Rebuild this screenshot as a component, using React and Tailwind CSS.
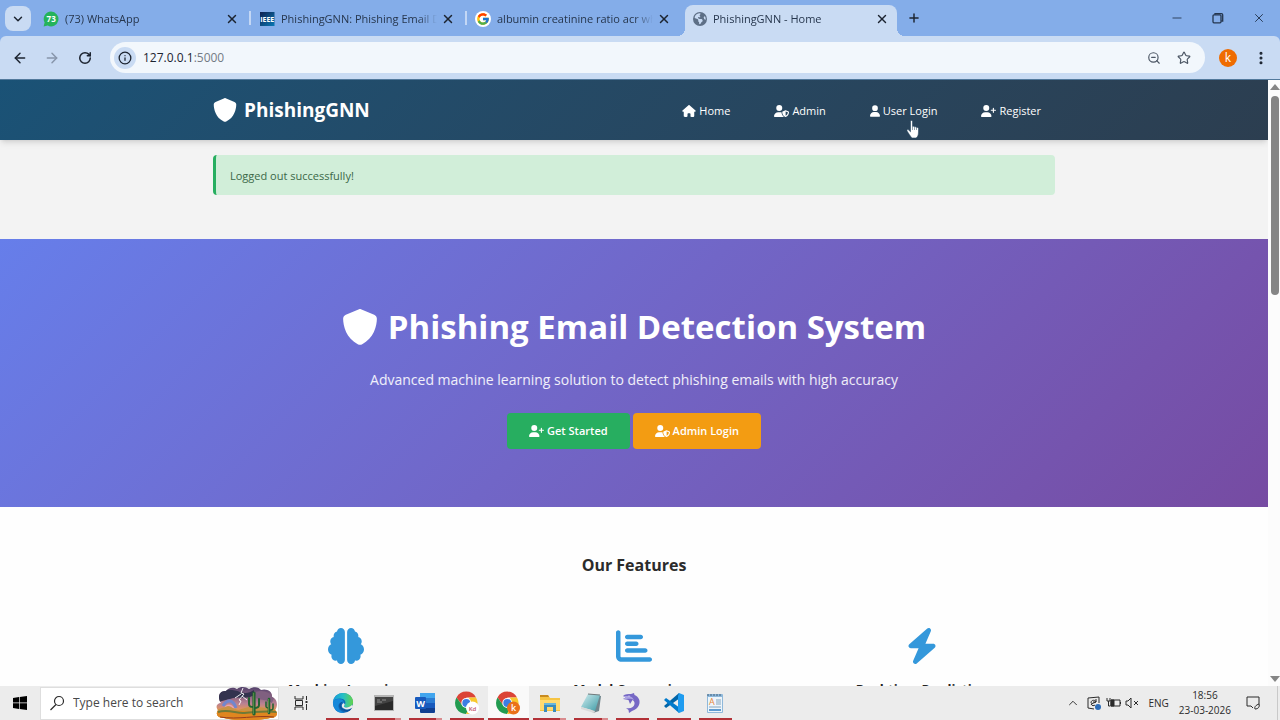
import {
  ArrowLeft,
  ArrowRight,
  ChevronDown,
  ChevronUp,
  EllipsisVertical,
  Info,
  Minus,
  Plus,
  RotateCw,
  Star,
  X,
  ZoomOut,
} from "lucide-react";
import {
  FaBolt,
  FaBrain,
  FaChartBar,
  FaEarthAmericas,
  FaHouse,
  FaShield,
  FaUser,
  FaUserPlus,
  FaUserShield,
} from "react-icons/fa6";
import { FcGoogle } from "react-icons/fc";

function WhatsAppIcon() {
  return (
    <svg viewBox="0 0 16 16" className="size-4 shrink-0">
      <path d="M8 .6a7.4 7.4 0 1 1-3.3 14L.6 15.500l1-3.900A7.400 7.400 0 0 1 8 .6z" fill="#25b35a" />
      <text x="8.200" y="11" textAnchor="middle" fontSize="8" fontWeight="700" fill="#fff">
        73
      </text>
    </svg>
  );
}

function IeeeIcon() {
  return (
    <svg viewBox="0 0 16 16" className="size-4 shrink-0">
      <defs>
        <linearGradient id="ieee" x1="0" y1="0" x2="1" y2="1">
          <stop offset="0" stopColor="#10204f" />
          <stop offset="1" stopColor="#0879b5" />
        </linearGradient>
      </defs>
      <rect x="1" y="1" width="14.500" height="14" fill="url(#ieee)" />
      <text x="8.200" y="11" textAnchor="middle" fontSize="7" fontWeight="700" fill="#fff">
        IEEE
      </text>
    </svg>
  );
}

function GoogleIcon() {
  return (
    <span className="flex size-4 shrink-0 items-center justify-center rounded-full bg-white">
      <FcGoogle className="size-3.5" />
    </span>
  );
}

const tabs = [
  { title: "(73) WhatsApp", icon: <WhatsAppIcon />, separator: true },
  { title: "PhishingGNN: Phishing Email D", icon: <IeeeIcon />, separator: true },
  { title: "albumin creatinine ratio acr wha", icon: <GoogleIcon /> },
  {
    title: "PhishingGNN - Home",
    icon: <FaEarthAmericas className="size-3.5 shrink-0 text-[#5d6f86]" />,
    active: true,
  },
];

function BrowserTab({ tab }) {
  return (
    <div
      className={
        tab.active
          ? "relative mx-0.5 flex h-[31px] w-[212px] shrink-0 items-center self-end rounded-t-lg bg-[#c9dbf3] pb-[3px] pl-2 pr-2"
          : "relative flex h-[31px] w-[216px] shrink-0 items-center self-end pb-[3px] pl-2 pr-3"
      }
    >
      {tab.active && (
        <>
          <span className="absolute -left-2 bottom-0 size-2 bg-[radial-gradient(circle_at_0_0,transparent_8px,#c9dbf3_8px)]" />
          <span className="absolute -right-2 bottom-0 size-2 bg-[radial-gradient(circle_at_100%_0,transparent_8px,#c9dbf3_8px)]" />
        </>
      )}
      {tab.icon}
      <span className="ml-1.5 min-w-0 flex-1 overflow-hidden whitespace-nowrap text-[11px] text-[#26364d] mask-r-from-88% mask-r-to-100%">
        {tab.title}
      </span>
      <button type="button" aria-label="Close tab" className="ml-1 text-[#1c2430]">
        <X className="size-3.5" strokeWidth={2.5} />
      </button>
      {tab.separator && <span className="absolute right-0 top-1.5 h-3.5 w-0.5 bg-[#c3d7f5]" />}
    </div>
  );
}

function TabStrip() {
  return (
    <div className="flex h-9 shrink-0 bg-[#84ade9]">
      <button
        type="button"
        aria-label="Search tabs"
        className="ml-[5px] mr-1 mt-1.5 flex h-[25px] w-[26px] items-center justify-center rounded-lg bg-[#c9dbf3] text-[#1c2430]"
      >
        <ChevronDown className="size-3.5" strokeWidth={2.5} />
      </button>
      {tabs.map((tab) => (
        <BrowserTab key={tab.title} tab={tab} />
      ))}
      <button type="button" aria-label="New tab" className="ml-2 text-[#1c2430]">
        <Plus className="size-3.5" strokeWidth={2.5} />
      </button>
      <div className="ml-auto flex w-[110px] items-center justify-between pr-3.5 text-[#24364f]">
        <button type="button" aria-label="Minimize">
          <Minus className="size-3.5" strokeWidth={1.5} />
        </button>
        <button type="button" aria-label="Restore">
          <svg viewBox="0 0 12 12" className="size-3" fill="none" stroke="currentColor" strokeWidth="1.300">
            <rect x="1" y="2.800" width="8" height="8" rx="1" />
            <path d="M3 2.800V1.600h6.500a1.200 1.200 0 0 1 1.200 1.200V9H9.300" />
          </svg>
        </button>
        <button type="button" aria-label="Close">
          <X className="size-3.5" strokeWidth={1.6} />
        </button>
      </div>
    </div>
  );
}

function Toolbar() {
  return (
    <div className="bg-[#84ade9]">
      <div className="flex h-11 shrink-0 items-center rounded-t-md border-b border-[#52799c] bg-[#c9dbf3] text-[#1c2430]">
        <button type="button" aria-label="Back" className="ml-3">
          <ArrowLeft className="size-4" strokeWidth={2.2} />
        </button>
        <button type="button" aria-label="Forward" className="ml-4 text-[#8795aa]">
          <ArrowRight className="size-4" strokeWidth={2.2} />
        </button>
        <button type="button" aria-label="Reload" className="ml-[18px]">
          <RotateCw className="size-3.5" strokeWidth={2.6} />
        </button>
        <div className="ml-[18px] flex h-[31px] min-w-0 flex-1 items-center rounded-full bg-[#f2f7fc] pl-1 pr-3.5">
          <button
            type="button"
            aria-label="Site information"
            className="flex size-[22px] items-center justify-center rounded-full bg-[#c9dbf3]"
          >
            <Info className="size-3.5" strokeWidth={2.2} />
          </button>
          <p className="ml-[7px] flex-1 text-xs">
            127.0.0.1<span className="text-[#747b84]">:5000</span>
          </p>
          <button type="button" aria-label="Zoom" className="text-[#4c5664]">
            <ZoomOut className="size-3.5" />
          </button>
          <button type="button" aria-label="Bookmark" className="ml-4 text-[#4c5664]">
            <Star className="size-3.5" />
          </button>
        </div>
        <button
          type="button"
          aria-label="Profile"
          className="ml-3.5 flex size-[18px] items-center justify-center rounded-full bg-[#ef6c00] text-xs text-white"
        >
          k
        </button>
        <button type="button" aria-label="Menu" className="ml-4 mr-[11px]">
          <EllipsisVertical className="size-4" strokeWidth={2.6} />
        </button>
      </div>
    </div>
  );
}

function HandCursor() {
  return (
    <svg viewBox="0 0 15 19" className="absolute left-[50px] top-[17px] h-[19px] w-[15px]">
      <path
        d="M4.500 1.500c0-1.300 2-1.300 2 0v5.200c.3-.7 2-.6 2 .4.500-.6 2-.4 2 .6.500-.5 2-.2 2 .9V12c0 3-1 5.500-2.500 6H5.800C4.500 16 2.500 13.500 1 11c-.5-1.200.8-1.900 1.700-1l1.800 1.800z"
        fill="#fff"
        stroke="#27465f"
        strokeWidth=".6"
      />
      <path d="M6.500 7v3M8.500 7.300V10M10.500 7.900V10" stroke="#27465f" strokeWidth=".5" />
    </svg>
  );
}

const navItems = [
  { label: "Home", icon: FaHouse, iconClass: "h-3 w-3.5" },
  { label: "Admin", icon: FaUserShield, iconClass: "h-3 w-[15px]" },
  { label: "User Login", icon: FaUser, iconClass: "h-3 w-2.5", hovered: true },
  { label: "Register", icon: FaUserPlus, iconClass: "h-3 w-[15px]" },
];

function Header() {
  return (
    <header className="relative bg-linear-135 from-[#1a5276] to-[#2c3e50] text-white shadow-md">
      <div className="mx-auto flex h-[60px] max-w-[842px] items-center justify-between">
        <a href="#home" className="flex items-center gap-[7px] text-[19px] font-bold">
          <FaShield className="size-6" />
          PhishingGNN
        </a>
        <nav className="flex gap-4 pt-0.5">
          {navItems.map(({ label, icon: Icon, iconClass, hovered }) => (
            <a
              key={label}
              href="#home"
              className="relative flex items-center gap-[3px] px-3.5 text-[11px]"
            >
              <Icon className={iconClass} />
              {label}
              {hovered && <HandCursor />}
            </a>
          ))}
        </nav>
      </div>
    </header>
  );
}

function Hero() {
  return (
    <section className="flex h-[268px] flex-col items-center bg-linear-135 from-[#667eea] to-[#764ba2] pt-16 text-white">
      <h1 className="flex h-12 items-center gap-2.5 text-[33px] font-bold">
        <FaShield className="size-9" />
        Phishing Email Detection System
      </h1>
      <p className="mt-[17px] text-sm leading-6 text-white/90">
        Advanced machine learning solution to detect phishing emails with high accuracy
      </p>
      <div className="mt-[21px] flex gap-[3px] text-[11px] font-semibold">
        <button type="button" className="flex h-9 items-center gap-[3px] rounded-sm bg-[#27ae60] px-[22px]">
          <FaUserPlus className="h-3 w-[15px]" />
          Get Started
        </button>
        <button type="button" className="flex h-9 items-center gap-[3px] rounded-sm bg-[#f39c12] px-[22px]">
          <FaUserShield className="h-3 w-[15px]" />
          Admin Login
        </button>
      </div>
    </section>
  );
}

const features = [
  { title: "Machine Learning", icon: FaBrain },
  { title: "Model Comparison", icon: FaChartBar },
  { title: "Real-time Prediction", icon: FaBolt },
];

function Features() {
  return (
    <section className="bg-[#fefefe] pt-11">
      <h2 className="text-center text-base leading-7 font-bold text-[#2b2b2b]">Our Features</h2>
      <div className="mx-auto mt-[43px] grid max-w-[842px] grid-cols-3 gap-[22px]">
        {features.map(({ title, icon: Icon }) => (
          <article key={title} className="flex flex-col items-center">
            <Icon className="mb-[7px] mt-1.5 size-9 text-[#3498db]" />
            <h3 className="mt-2 text-[13px] leading-5 font-bold text-[#222]">{title}</h3>
          </article>
        ))}
      </div>
    </section>
  );
}

function ScrollBar() {
  return (
    <div className="flex w-3 shrink-0 flex-col items-center bg-[#fcfcfc] py-1 pl-0.5 text-[#858585]">
      <svg viewBox="0 0 10 6" className="h-1.5 w-2.5">
        <path d="M5 0l5 6H0z" fill="currentColor" />
      </svg>
      <div className="mt-1.5 h-[199px] w-2 rounded-full bg-[#858585]" />
      <svg viewBox="0 0 10 6" className="mt-auto h-1.5 w-2.5">
        <path d="M0 0h10L5 6z" fill="currentColor" />
      </svg>
    </div>
  );
}

function DesertArt() {
  return (
    <svg viewBox="0 0 62 33" className="h-[33px] w-[62px]">
      <defs>
        <linearGradient id="sky" x1="0" y1="0" x2="0" y2="1">
          <stop offset="0" stopColor="#51406b" />
          <stop offset=".5" stopColor="#b98193" />
          <stop offset=".75" stopColor="#f09a4b" />
        </linearGradient>
        <clipPath id="cloud">
          <path d="M5 16C1 11 3 3 10 4c3-4 8-4 11-2 4-3 9-2 12 0 5-3 10-2 12 1 6-2 12 2 11 7 6 2 6 10 3 13 4 4 1 8-5 8-14 3-34 3-46 0-6 0-9-4-6-8-3-3-1-7 3-7z" />
        </clipPath>
      </defs>
      <g clipPath="url(#cloud)">
        <path d="M0 0h62v33H0z" fill="url(#sky)" />
        <path d="M3 6c8-5 15-3 21-1s9 1 14-2v5c-7 5-15 1-21 3S6 13 2 16z" fill="#33334e" />
        <path d="M40 5c8-3 13 1 18 6l-2 5c-6-4-9-2-16-5z" fill="#806080" />
        <path d="M7 19c4-7 10-7 13 2" fill="none" stroke="#7186ce" strokeWidth="3" />
        <path d="M8 22c3-5 7-5 10 0" fill="none" stroke="#e8a2b4" strokeWidth="1.500" />
        <path d="M0 23l12-4 10 4 14-4 26 4v10H0z" fill="#c99345" />
        <path d="M0 25c15-4 28 2 62-2v10H0z" fill="#e0861f" />
        <path d="M2 25c10-3 17 1 25 1s20-3 34-1" fill="none" stroke="#6f7a37" strokeWidth="2" />
        <path d="M4 30c18 3 35-2 54 0" fill="none" stroke="#963c1f" />
        <path d="M27 1l-2 5 3 1-5 6 2 1-2 4M25 7l-6 4M26 9l5 4" fill="none" stroke="#fff" strokeWidth=".9" />
      </g>
      <g fill="none" stroke="#246333" strokeLinecap="round">
        <path d="M38 27V6" strokeWidth="3.200" />
        <path d="M33 11v6c0 3 2 3 5 3m5-8v6c0 2-2 3-5 3" strokeWidth="2" />
        <path d="M53 26V12" strokeWidth="2.600" />
        <path d="M50 15v4c0 2 1 2 3 2m4-4v4c0 2-1 2-4 2" strokeWidth="1.600" />
      </g>
      <path d="M37.500 6v21M52.500 12v14" stroke="#78a44f" strokeWidth=".6" />
    </svg>
  );
}

function EdgeIcon() {
  return (
    <svg viewBox="0 0 24 24" className="size-[22px]">
      <defs>
        <linearGradient id="edgeTop" x1="0" y1="0" x2="1" y2="0">
          <stop offset="0" stopColor="#159bd9" />
          <stop offset=".5" stopColor="#25bfc6" />
          <stop offset="1" stopColor="#63d34a" />
        </linearGradient>
      </defs>
      <circle cx="12" cy="12" r="11" fill="#1268b3" />
      <path d="M1 11C2 4 7 1 12 1c7 0 11 5 11 10 0 4-3 6-7 6-3 0-4-1-2-3 2-4-1-7-5-7-4 0-7 1-8 4z" fill="url(#edgeTop)" />
      <path d="M1 11c1-3 5-4 8-3 3 0 5 3 4 5-2-3-6-1-6 2 0 4 3 7 7 7C7 25 1 19 1 11z" fill="#1688da" />
      <path d="M13 11c-3 0-4 3-3 5 2 4 8 5 12 1-1 2-2 3-4 4-6 1-10-3-10-6s3-5 5-4z" fill="#0c519c" />
      <path d="M13 12c-3 1-3 5 0 6 3 2 7 1 10-2l-1-2c-2 2-4 3-6 3-3 0-4-1-2-3z" fill="#ececec" />
    </svg>
  );
}

function TerminalIcon() {
  return (
    <svg viewBox="0 0 22 20" className="h-5 w-[22px]">
      <path d="M1 2h20v16H1z" fill="#b5b5b5" />
      <path d="M2 4h18v13H2z" fill="#292929" />
      <path d="M4 7h3M9 7h4M4 9h5" stroke="#9b9b9b" strokeWidth=".8" />
      <path d="M2 4h18v4L2 13z" fill="#fff" opacity=".12" />
    </svg>
  );
}

function WordIcon() {
  return (
    <svg viewBox="0 0 22 22" className="size-[22px]">
      <rect x="6" y="1" width="15" height="20" rx="1.500" fill="#2b7cd3" />
      <path d="M6 1h15v5H6z" fill="#41a5ee" />
      <path d="M6 11h15v5H6z" fill="#185abd" />
      <path d="M6 16h15v4l-1 1H7l-1-1z" fill="#103f91" />
      <rect x="1" y="5" width="11" height="12" rx="1" fill="#185abd" />
      <text x="6.500" y="14.500" textAnchor="middle" fontSize="9" fontWeight="700" fill="#fff">
        W
      </text>
    </svg>
  );
}

function ChromeIcon({ badge, badgeSize, badgeColor, textColor }) {
  return (
    <svg viewBox="0 0 24 24" className="size-6">
      <path d="M1.500 6.500A11 11 0 0 1 21 6.500H11.500L7 14z" fill="#db4437" />
      <path d="M1.500 6.500A11 11 0 0 0 11 23l5-8.500-9-.5z" fill="#229b50" />
      <path d="M21 6.500A11 11 0 0 1 11 23l5-8.500-2-8z" fill="#f8c82d" />
      <circle cx="11.300" cy="12" r="5" fill="#fff" />
      <circle cx="11.300" cy="12" r="4" fill="#3c7de3" />
      <circle cx="17.500" cy="17" r="6.500" fill={badgeColor} />
      <text x="17.500" y="20" textAnchor="middle" fontSize={badgeSize} fontWeight="600" fill={textColor}>
        {badge}
      </text>
    </svg>
  );
}

function FolderIcon() {
  return (
    <svg viewBox="0 0 22 20" className="h-5 w-[22px]">
      <path d="M1 2h8l2 3h10v13H1z" fill="#f6c443" />
      <path d="M1 2h8l1 2H1z" fill="#c88b20" />
      <path d="M1 7h20v10H1z" fill="#ffda70" />
      <path d="M5 10h12v9h-3v-5H8v5H5z" fill="#398bbd" />
      <path d="M5 10h12v2H5z" fill="#68b6dc" />
    </svg>
  );
}

function NotebookIcon() {
  return (
    <svg viewBox="0 0 22 22" className="size-[22px]">
      <defs>
        <linearGradient id="notebook" x1="0" y1="0" x2="1" y2="1">
          <stop offset="0" stopColor="#d3eef0" />
          <stop offset="1" stopColor="#3c9aa5" />
        </linearGradient>
      </defs>
      <path d="M8 2l13 2-2 15-6 2z" fill="#70858c" />
      <path d="M8 2l12 1-5 16L1 15z" fill="url(#notebook)" />
      <path d="M1 15l14 4-1 2L1 17z" fill="#dadada" />
      <path d="M8 2l12 1" stroke="#717b7d" />
    </svg>
  );
}

function DolphinIcon() {
  return (
    <svg viewBox="0 0 22 22" className="size-[22px]">
      <path
        d="M2 4c2-2 5-2 8-2l3-1 .5 2C18 5 19.500 9 18 13c-1 3-4 5-7 6l-3 2-.5-3L5 16c5 1 8-1 8.500-4 .3-2-.5-3-2-4L9 12 7.500 8 2 7l3-1.500z"
        fill="#7668c5"
      />
      <path d="M2 4c4 0 9-1 11 4-3-2-6-1-11-1l3-1.500z" fill="#aba2e3" />
      <circle cx="8" cy="4" r=".6" fill="#fff" />
    </svg>
  );
}

function CodeIcon() {
  return (
    <svg viewBox="0 0 22 22" className="size-[22px]">
      <path d="M16 1L1 14l2 2L17 6z" fill="#0065a9" />
      <path d="M16 21L1 8l2-2 14 10z" fill="#007acc" />
      <path d="M16 1l5 2v16l-5 2-1-2V4z" fill="#1f9cf0" />
    </svg>
  );
}

function WordPadIcon() {
  return (
    <svg viewBox="0 0 20 22" className="h-[22px] w-5">
      <rect x="2" y="2" width="16" height="19" rx="1" fill="#8fb8da" />
      <rect x="3" y="5" width="14" height="15" fill="#edf5fb" />
      <path d="M3 2v2m3-2v2m3-2v2m3-2v2m3-2v2" stroke="#42617c" />
      <text x="4" y="13" fontSize="9" fill="#e6873c">
        A
      </text>
      <path d="M11 8h5m-5 2h5m-5 2h5M4 15h12" stroke="#6b91b0" strokeWidth=".8" />
      <path d="M4 17h12v2H4z" fill="#5f9bd0" />
    </svg>
  );
}

const apps = [
  { name: "Edge", icon: <EdgeIcon /> },
  { name: "Terminal", icon: <TerminalIcon />, stacked: true },
  { name: "Word", icon: <WordIcon />, stacked: true },
  { name: "Chrome", icon: <ChromeIcon badge="Kd" badgeSize={6} badgeColor="#fff" textColor="#c25068" /> },
  {
    name: "Chrome, second profile",
    icon: <ChromeIcon badge="k" badgeSize={9} badgeColor="#ea711a" textColor="#fff" />,
    active: true,
  },
  { name: "Files", icon: <FolderIcon />, stacked: true },
  { name: "Notebook", icon: <NotebookIcon />, stacked: true },
  { name: "Dolphin", icon: <DolphinIcon /> },
  { name: "Code", icon: <CodeIcon /> },
  { name: "WordPad", icon: <WordPadIcon /> },
];

function SystemTray() {
  return (
    <div className="ml-auto flex items-center text-[#2b2b2b]">
      <ChevronUp className="size-3.5" strokeWidth={1.6} />
      <svg viewBox="0 0 16 16" className="ml-1.5 size-4" fill="none" stroke="currentColor">
        <path d="M2 3l11-1v6M2 3v10l6 1" />
        <path d="M5 8c0-4 5-3 5-1L5 9c1 2 3 2 4 1M10 4v3H7" />
        <circle cx="12" cy="12" r="3" fill="#2d6db8" stroke="none" />
      </svg>
      <svg viewBox="0 0 16 16" className="ml-1 size-4" fill="none" stroke="currentColor">
        <path d="M5 5h9v6H5zM14.500 7v2M1 3v3h3V3M2.500 6v5h2" />
        <path d="M5 5h3v6H5z" fill="currentColor" />
      </svg>
      <svg viewBox="0 0 16 16" className="ml-0.5 size-4" fill="none" stroke="currentColor">
        <path d="M2 6h2l3-3v10l-3-3H2zM10 6l4 4m0-4l-4 4" />
      </svg>
      <span className="ml-2 text-[10px]">ENG</span>
      <time className="ml-2.5 text-center text-[10px] leading-[15px]">
        18:56
        <br />
        23-03-2026
      </time>
      <button type="button" aria-label="Notifications" className="ml-3.5 mr-4">
        <svg viewBox="0 0 16 16" className="size-4" fill="none" stroke="currentColor">
          <path d="M8 13l-2-2H2V2h12v7" />
          <path d="M14 9c-3 1-5 3-4 5 3 0 5-2 4-5z" />
        </svg>
      </button>
      <span className="h-[34px] w-[3px] border-l border-[#c9c9c9]" />
    </div>
  );
}

function Taskbar() {
  return (
    <footer className="flex h-[34px] shrink-0 items-center bg-[#ececec]">
      <button type="button" aria-label="Start" className="flex w-10 justify-center">
        <svg viewBox="0 0 14 14" className="size-3.5">
          <path d="M0 2l6-1v5.600H0zM6.700.9L14 0v6.600H6.700zM0 7.300h6v5.700l-6-1zM6.700 7.300H14V14l-7.300-1z" />
        </svg>
      </button>
      <label className="flex h-[33px] w-[239px] items-center border border-[#dedede] bg-white pl-2">
        <svg viewBox="0 0 16 16" className="size-4" fill="none" stroke="#2b2b2b" strokeWidth="1.200">
          <circle cx="10" cy="6" r="4.500" />
          <path d="M7 9.500L1.500 15" />
        </svg>
        <input
          type="text"
          aria-label="Search"
          placeholder="Type here to search"
          className="ml-2 min-w-0 flex-1 text-xs outline-none placeholder:text-[#484848]"
        />
        <DesertArt />
      </label>
      <button type="button" aria-label="Task view" className="flex w-[43px] justify-center">
        <svg viewBox="0 0 16 16" className="size-4" fill="none" stroke="#2b2b2b">
          <path d="M2 1v3h8V1M2 15v-3h8v3M2.500 5.500h7v5h-7zM13.500 1v4M13.500 9v6" />
          <path d="M12.500 6h2v2h-2z" fill="#2b2b2b" stroke="none" />
        </svg>
      </button>
      <div className="grid h-full w-[414px] grid-cols-10">
        {apps.map((app) => (
          <button
            key={app.name}
            type="button"
            aria-label={app.name}
            className={
              app.active
                ? "flex flex-col items-center justify-between bg-[#f9f9f9] pt-[5px]"
                : "flex flex-col items-center justify-between px-1 pt-[5px]"
            }
          >
            <span className="flex h-6 items-center">{app.icon}</span>
            <span className="flex h-0.5 w-full bg-[#b23137]">
              {app.stacked && <span className="ml-auto w-1.5 bg-[#d98b8e]" />}
            </span>
          </button>
        ))}
      </div>
      <SystemTray />
    </footer>
  );
}

export default function App() {
  return (
    <div className="flex h-screen flex-col overflow-hidden font-['Open_Sans','Noto_Sans',sans-serif]">
      <TabStrip />
      <Toolbar />
      <div className="flex min-h-0 flex-1">
        <main className="min-w-0 flex-1 overflow-hidden bg-[#f3f3f3]">
          <Header />
          <div className="mx-auto mb-11 mt-[15px] flex h-10 max-w-[842px] items-center rounded-sm border-l-3 border-[#27ae60] bg-[#d1eed9] px-3.5 pt-[3px]">
            <p className="text-[11px] text-[#3b6848]">Logged out successfully!</p>
          </div>
          <Hero />
          <Features />
        </main>
        <ScrollBar />
      </div>
      <Taskbar />
    </div>
  );
}
